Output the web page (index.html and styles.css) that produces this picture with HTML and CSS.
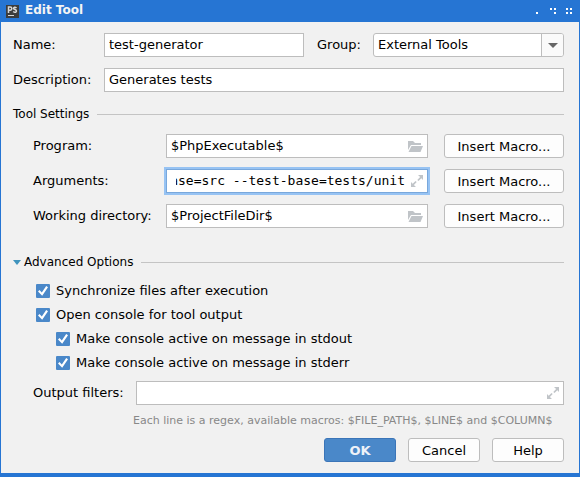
FILE: index.html
```html
<!DOCTYPE html>
<html lang="en">
<head>
<meta charset="utf-8">
<title>Edit Tool</title>
<link rel="stylesheet" href="styles.css">
</head>
<body>
<svg class="defs" aria-hidden="true">
  <symbol id="folder" viewBox="0 0 15 11">
    <path d="M0 9V0h5l2 2h6v2H3z"/>
    <path d="M3.5 5H15l-2.5 6H0.5z"/>
  </symbol>
  <symbol id="expand" viewBox="0 0 12 12">
    <path d="M7 0h5v5l-1.700-1.700-2.800 2.800-1.200-1.200 2.800-2.800zM0 7l1.700 1.700 2.800-2.800 1.200 1.200-2.800 2.800L5 12H0z"/>
  </symbol>
</svg>
<main class="dialog">
  <header class="titlebar">
    <svg class="logo" viewBox="0 0 13 13" aria-hidden="true">
      <path fill="#3c3c3c" d="M0 0h13v13H0z"/>
      <path fill="none" stroke="#d8d8d8" stroke-width="1.500" d="M2.500 8V2h1.700q1.600 0 1.600 1.600T4.200 5.300H2.500M10.500 3Q9.500 2 8.500 2.200 7.300 2.600 7.600 3.700L10 5Q11 6.500 9.800 7.200 8.500 7.700 7.200 6.500"/>
      <path fill="#d8d8d8" d="M2 10h6v1H2z"/>
    </svg>
    <h1>Edit Tool</h1>
    <svg class="window-controls" viewBox="0 0 37 6" shape-rendering="crispEdges" aria-hidden="true">
      <path fill="#fff" d="M0 4h2v2H0zM14 0h2v2h-2zM18 0h2v2h-2zM18 4h2v2h-2zM30 0h2v2h-2zM34 0h2v2h-2zM30 4h2v2h-2zM34 4h2v2h-2z"/>
    </svg>
  </header>
  <form class="content">
    <div class="general">
      <label for="name">Name:</label>
      <div class="name-row">
        <input class="field" id="name" value="test-generator">
        <label for="group">Group:</label>
        <div class="combo">
          <select id="group"><option>External Tools</option></select>
          <span class="combo-arrow"></span>
        </div>
      </div>
      <label for="description">Description:</label>
      <input class="field" id="description" value="Generates tests">
    </div>

    <h2 class="section">Tool Settings</h2>
    <div class="settings">
      <label for="program">Program:</label>
      <div class="box"><input id="program" value="$PhpExecutable$"><svg class="folder"><use href="#folder"/></svg></div>
      <button class="button" type="button">Insert Macro...</button>
      <label for="arguments">Arguments:</label>
      <div class="box focused"><input class="mono" id="arguments" value="ase=src --test-base=tests/unit"><svg class="expand"><use href="#expand"/></svg></div>
      <button class="button" type="button">Insert Macro...</button>
      <label for="directory">Working directory:</label>
      <div class="box"><input id="directory" value="$ProjectFileDir$"><svg class="folder"><use href="#folder"/></svg></div>
      <button class="button" type="button">Insert Macro...</button>
    </div>

    <h2 class="section advanced"><span class="triangle"></span>Advanced Options</h2>
    <div class="options">
      <label><input type="checkbox" checked>Synchronize files after execution</label>
      <label><input type="checkbox" checked>Open console for tool output</label>
      <label class="nested"><input type="checkbox" checked>Make console active on message in stdout</label>
      <label class="nested"><input type="checkbox" checked>Make console active on message in stderr</label>
    </div>
    <div class="filters">
      <label for="filters">Output filters:</label>
      <div class="box"><input id="filters"><svg class="expand"><use href="#expand"/></svg></div>
    </div>
    <p class="hint">Each line is a regex, available macros: $FILE_PATH$, $LINE$ and $COLUMN$</p>
    <footer class="actions">
      <button class="button primary" type="submit">OK</button>
      <button class="button" type="button">Cancel</button>
      <button class="button" type="button">Help</button>
    </footer>
  </form>
</main>
</body>
</html>
```
FILE: styles.css
```css
* { box-sizing: border-box; }
body {
  margin: 0;
  background: #f1f1f1;
  color: #000;
  font: 13px/16px "DejaVu Sans", sans-serif;
}
input, select, button { font: inherit; color: inherit; margin: 0; }
.defs { display: none; }
.dialog {
  min-height: 100vh;
  border: solid #2675d3;
  border-width: 0 1px 4px;
}
.titlebar {
  display: flex;
  align-items: center;
  height: 22px;
  padding: 0 6px 0 5px;
  background: #2675d3;
  color: #f4f4f4;
}
.logo { width: 13px; height: 13px; }
h1 { flex: 1; margin: 0 0 0 6px; padding-bottom: 2px; font-size: 12px; line-height: 16px; }
.window-controls { width: 37px; height: 6px; }
.content { padding: 11px 15px 11px 12px; }
.general {
  display: grid;
  grid-template-columns: 91px 1fr;
  row-gap: 11px;
  align-items: center;
}
.name-row { display: flex; align-items: center; }
.name-row .field { width: 200px; }
.name-row label { width: 69px; padding-left: 13px; }
.field {
  width: 100%;
  height: 24px;
  padding: 0 4px 2px;
  border: 1px solid #bdbdbd;
  background: #fff;
  outline: 0;
}
.combo { position: relative; flex: 1; }
.combo select {
  display: block;
  width: 100%;
  height: 24px;
  padding: 0 24px 0 4px;
  appearance: none;
  border: 1px solid #bdbdbd;
  border-radius: 3px;
  background: #fff;
  outline: 0;
}
.combo-arrow {
  position: absolute;
  top: 1px;
  right: 1px;
  bottom: 1px;
  width: 22px;
  border-left: 1px solid #bdbdbd;
  border-radius: 0 2px 2px 0;
  background: #fafafa;
  pointer-events: none;
}
.combo-arrow::after {
  content: "";
  position: absolute;
  top: 9px;
  left: 6px;
  border: solid transparent;
  border-width: 5px 5px 0;
  border-top-color: #666;
}
.section {
  display: flex;
  align-items: center;
  margin: 14px 0 12px;
  font-size: 12px;
  font-weight: normal;
  line-height: 16px;
}
.section::after {
  content: "";
  flex: 1;
  height: 1px;
  margin-left: 8px;
  background: #c4c4c4;
}
.settings {
  display: grid;
  grid-template-columns: 133px 1fr 120px;
  row-gap: 11px;
  align-items: center;
  padding-left: 20px;
}
.box {
  display: flex;
  align-items: center;
  height: 24px;
  padding: 0 4px;
  border: 1px solid #bdbdbd;
  background: #fff;
}
.settings .box { margin-right: 16px; }
.box input {
  flex: 1;
  min-width: 0;
  height: 22px;
  padding: 0 0 2px;
  border: 0;
  background: transparent;
  outline: 0;
}
.box svg { flex: none; margin-left: 6px; fill: #c0c4c8; }
.folder { width: 15px; height: 11px; }
.expand { width: 12px; height: 12px; }
.focused {
  padding-left: 9px;
  border-color: #79a8dc;
  box-shadow: 0 0 0 2px #97c3f3;
}
.box .mono { font-family: "DejaVu Sans Mono", monospace; direction: rtl; }
.button {
  height: 24px;
  padding: 2px 0 0;
  border: 1px solid #bdbdbd;
  border-radius: 3px;
  background: #fdfdfd;
}
.advanced { margin: 26px 0 13px; }
.triangle {
  margin-right: 3px;
  border: solid transparent;
  border-width: 5px 4px 0;
  border-top-color: #3f93bd;
}
.options { display: grid; row-gap: 8px; padding-left: 23px; }
.options label { display: flex; align-items: center; }
.options .nested { padding-left: 20px; }
.options input {
  width: 14px;
  height: 14px;
  margin-right: 6px;
  appearance: none;
  border-radius: 1px;
  background: #4a88c9;
  display: grid;
  place-items: center;
}
.options input:checked::before {
  content: "";
  width: 10px;
  height: 10px;
  background: #fff;
  clip-path: polygon(0 55%, 15% 40%, 38% 64%, 82% 0, 100% 12%, 42% 98%);
}
.filters {
  display: grid;
  grid-template-columns: 103px 1fr;
  align-items: center;
  padding-left: 20px;
  margin-top: 10px;
}
.hint {
  margin: 8px -8px 9px 120px;
  color: #888;
  font-size: 11px;
  line-height: 16px;
  white-space: nowrap;
}
.actions { display: flex; justify-content: flex-end; gap: 12px; }
.actions .button { width: 72px; }
.actions .primary {
  border-color: #3b75b8;
  background: #4a88c9;
  color: #eef2f8;
  font-weight: bold;
}
```
